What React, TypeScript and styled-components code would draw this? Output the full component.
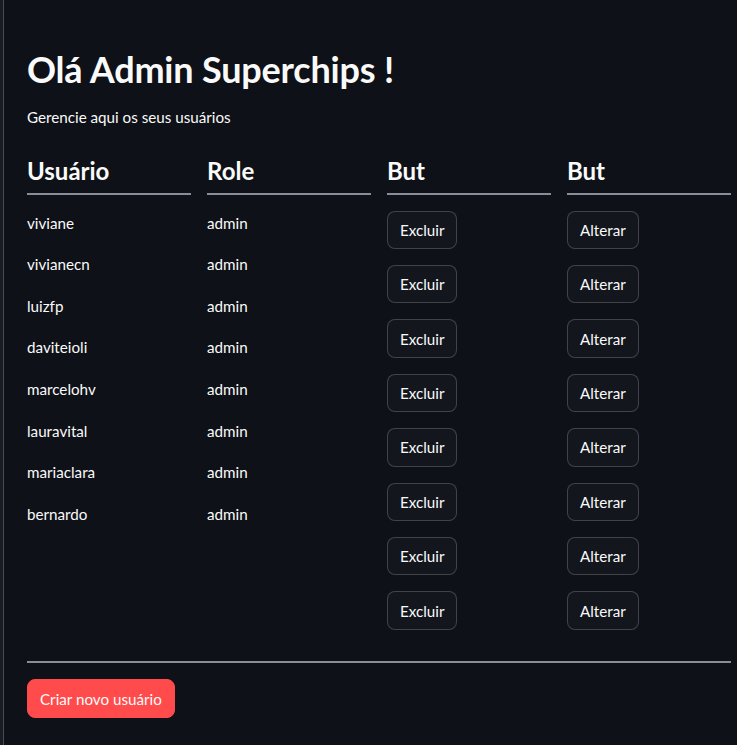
import React from "react";
import styled, { createGlobalStyle } from "styled-components";

const Global = createGlobalStyle`
  html, body { margin: 0; padding: 0; background: #0e1117; }
  body { font-family: Lato, "Noto Sans", sans-serif; color: #fafafa; }
  * { box-sizing: border-box; }
`;

const Page = styled.div`
  display: flex;
  min-height: 745px;
  background: #0e1117;
`;

const Rail = styled.div`
  width: 4px;
  flex: none;
  background: #1a1c23;
  border-right: 1px solid #4a4c55;
`;

const Main = styled.main`
  flex: 1;
  padding: 46px 6px 0 23px;
  display: flex;
  flex-direction: column;
`;

const Title = styled.h1`
  margin: 0;
  font-size: 36px;
  line-height: 46px;
  font-weight: 700;
  letter-spacing: -0.2px;
`;

const Text = styled.p`
  margin: 0;
  font-size: 15.2px;
  line-height: 25.6px;
`;

const Subtitle = styled(Text)`
  margin-top: 13px;
`;

const Columns = styled.div`
  margin-top: 16px;
  display: grid;
  grid-template-columns: repeat(4, 1fr);
  column-gap: 16px;
`;

const Column = styled.div`
  display: flex;
  flex-direction: column;
  gap: 16px;
  align-items: flex-start;
`;

const Header = styled.h2`
  margin: 0;
  align-self: stretch;
  padding: 10px 0 8px;
  font-size: 24px;
  line-height: 28px;
  font-weight: 700;
  border-bottom: 2px solid #8b8b99;
`;

const Button = styled.button<{ $primary?: boolean }>`
  height: 38.4px;
  padding: 0 12px;
  border-radius: 8px;
  font-family: inherit;
  font-size: 15.2px;
  color: #fafafa;
  cursor: pointer;
  background: ${(p) => (p.$primary ? "#ff4b4b" : "#13161d")};
  border: 1px solid ${(p) => (p.$primary ? "#ff4b4b" : "rgba(250,250,250,0.2)")};
`;

const Divider = styled.hr`
  margin: 31.6px 0 16px;
  border: none;
  height: 2px;
  background: #8b8b99;
`;

const users = [
  "viviane",
  "vivianecn",
  "luizfp",
  "daviteioli",
  "marcelohv",
  "lauravital",
  "mariaclara",
  "bernardo",
];

export default function App() {
  return (
    <Page>
      <Global />
      <Rail />
      <Main>
        <Title>Olá Admin Superchips !</Title>
        <Subtitle>Gerencie aqui os seus usuários</Subtitle>
        <Columns>
          <Column>
            <Header>Usuário</Header>
            {users.map((u) => (
              <Text key={u}>{u}</Text>
            ))}
          </Column>
          <Column>
            <Header>Role</Header>
            {users.map((u) => (
              <Text key={u}>admin</Text>
            ))}
          </Column>
          <Column>
            <Header>But</Header>
            {users.map((u) => (
              <Button key={u}>Excluir</Button>
            ))}
          </Column>
          <Column>
            <Header>But</Header>
            {users.map((u) => (
              <Button key={u}>Alterar</Button>
            ))}
          </Column>
        </Columns>
        <Divider />
        <div>
          <Button $primary>Criar novo usuário</Button>
        </div>
      </Main>
    </Page>
  );
}
